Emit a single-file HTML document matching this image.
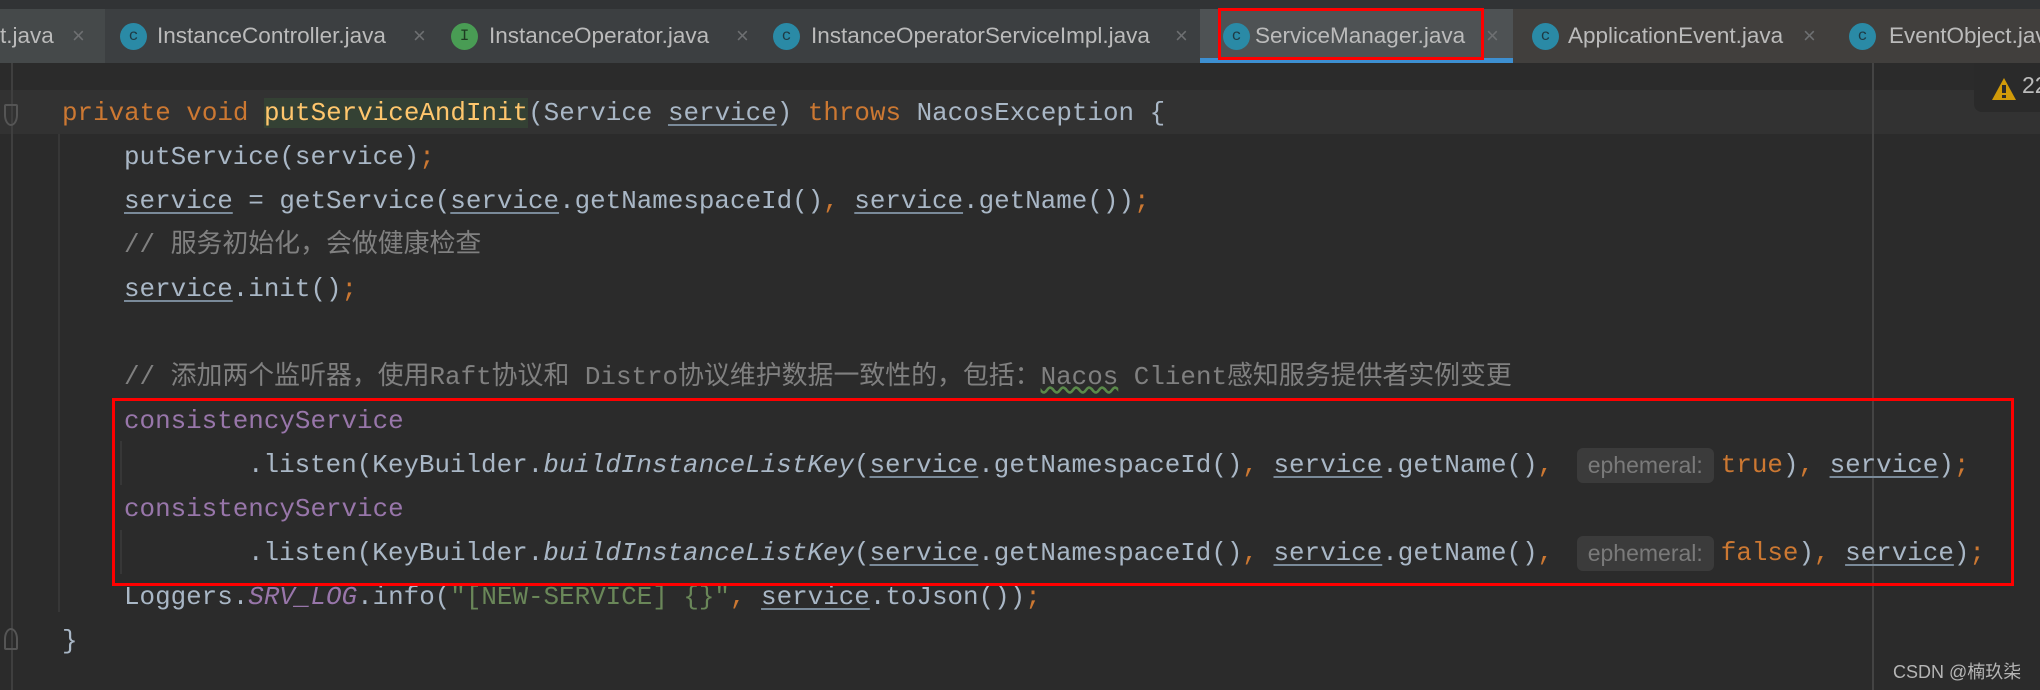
<!DOCTYPE html>
<html><head><meta charset="utf-8"><style>
*{margin:0;padding:0;box-sizing:border-box}
body{width:2040px;height:690px;background:#2b2b2b;overflow:hidden;position:relative;font-family:"Liberation Mono","Noto Sans CJK SC",monospace}
.top{position:absolute;left:0;top:0;width:2040px;height:9px;background:#313335}
.tabs{position:absolute;left:0;top:9px;width:2040px;height:54px;background:#3c3f41}
.tab{position:absolute;top:0;height:54px;font-family:"Liberation Sans",sans-serif;font-size:22.5px;color:#bbbbbb;line-height:54px;white-space:nowrap}
.ic{position:absolute;top:14px;width:27px;height:27px;border-radius:50%;background:#2a8aa6;color:#1e3a44;font-family:"Liberation Mono",monospace;font-size:16px;line-height:27px;text-align:center}
.x{position:absolute;color:#6e7072;font-size:22px}
.line{position:absolute;left:0;height:44px;line-height:44px;font-size:25.9px;color:#a9b7c6;white-space:pre}
.k{color:#cc7832}.m{color:#ffc66d;background:#344134}.p{color:#9876aa}.c{color:#808080}.s{color:#6a8759}
.u{text-decoration:underline;text-decoration-color:#7a8a99;text-underline-offset:4px}
.i{font-style:italic}
.hint{display:inline-block;background:#3b3b3b;color:#7a7a7a;font-family:"Liberation Sans",sans-serif;font-size:23px;line-height:35px;height:35px;padding:0 11px;border-radius:6px;vertical-align:middle;margin:0 7px 0 8px}
.red{position:absolute;border:3px solid #ff0000}
</style></head><body>
<div class="top"></div>
<div class="tabs">
 <div class="tab" style="left:0;width:105px;background:#45494a"><span style="position:absolute;left:0">t.java</span><span class="x" style="left:72px">×</span></div>
 <div class="tab" style="left:120px"><span class="ic" style="left:0">c</span><span style="position:absolute;left:37px">InstanceController.java</span><span class="x" style="left:293px">×</span></div>
 <div class="tab" style="left:451px"><span class="ic" style="left:0;background:#499c54;color:#1e3a22">I</span><span style="position:absolute;left:38px">InstanceOperator.java</span><span class="x" style="left:285px">×</span></div>
 <div class="tab" style="left:773px"><span class="ic" style="left:0">c</span><span style="position:absolute;left:38px">InstanceOperatorServiceImpl.java</span><span class="x" style="left:402px">×</span></div>
 <div class="tab" style="left:1200px;width:313px;background:#4e5254"><span class="ic" style="left:23px">c</span><span style="position:absolute;left:55px">ServiceManager.java</span><span class="x" style="left:286px">×</span><div style="position:absolute;left:0;bottom:0;width:313px;height:5px;background:#3d8fd1"></div></div>
 <div class="tab" style="left:1513px;width:527px;background:#413f3d"><span class="ic" style="left:19px">c</span><span style="position:absolute;left:55px">ApplicationEvent.java</span><span class="x" style="left:290px">×</span><span class="ic" style="left:336px">c</span><span style="position:absolute;left:376px">EventObject.java</span></div>
</div>
<div style="position:absolute;left:0;top:90px;width:2040px;height:44px;background:#323232"></div>
<div style="position:absolute;left:11px;top:63px;width:2px;height:627px;background:#3f3f3f"></div>
<div style="position:absolute;left:58px;top:134px;width:2px;height:478px;background:#373737"></div>
<div style="position:absolute;left:120px;top:441px;width:2px;height:44px;background:#373737"></div>
<div style="position:absolute;left:120px;top:530px;width:2px;height:44px;background:#373737"></div>
<div style="position:absolute;left:1872px;top:63px;width:2px;height:627px;background:#444"></div>
<div style="position:absolute;left:4px;top:104px;width:14px;height:22px;border:2px solid #555;border-radius:2px 2px 50% 50%"></div>
<div style="position:absolute;left:4px;top:628px;width:14px;height:22px;border:2px solid #555;border-radius:50% 50% 2px 2px"></div>
<div style="position:absolute;left:1974px;top:63px;width:70px;height:49px;background:#2a2a2a;border-radius:0 0 0 8px"></div>
<svg style="position:absolute;left:1991px;top:77px" width="26" height="24"><polygon points="13,1 25,23 1,23" fill="#d09a09"/><rect x="11" y="8" width="4" height="8" fill="#2a2a2a"/><rect x="11" y="18" width="4" height="3" fill="#2a2a2a"/></svg>
<div style="position:absolute;left:2022px;top:72px;font-family:'Liberation Sans',sans-serif;font-size:23px;color:#bbb">22</div>

<div class="line" style="top:91px;left:62px"><span class="k">private void </span><span class="m">putServiceAndInit</span>(Service <span class="u">service</span>) <span class="k">throws </span>NacosException {</div>
<div class="line" style="top:135px;left:124px">putService(service)<span class="k">;</span></div>
<div class="line" style="top:179px;left:124px"><span class="u">service</span> = getService(<span class="u">service</span>.getNamespaceId()<span class="k">, </span><span class="u">service</span>.getName())<span class="k">;</span></div>
<div class="line c" style="top:223px;left:124px">// 服务初始化，会做健康检查</div>
<div class="line" style="top:267px;left:124px"><span class="u">service</span>.init()<span class="k">;</span></div>
<div class="line c" style="top:355px;left:124px">// 添加两个监听器，使用Raft协议和 Distro协议维护数据一致性的，包括：<span style="text-decoration:underline wavy #5a8a4a">Nacos</span> Client感知服务提供者实例变更</div>
<div class="line p" style="top:399px;left:124px">consistencyService</div>
<div class="line" style="top:443px;left:248px">.listen(KeyBuilder.<span class="i">buildInstanceListKey</span>(<span class="u">service</span>.getNamespaceId()<span class="k">, </span><span class="u">service</span>.getName()<span class="k">, </span><span class="hint">ephemeral:</span><span class="k">true</span>)<span class="k">, </span><span class="u">service</span>)<span class="k">;</span></div>
<div class="line p" style="top:487px;left:124px">consistencyService</div>
<div class="line" style="top:531px;left:248px">.listen(KeyBuilder.<span class="i">buildInstanceListKey</span>(<span class="u">service</span>.getNamespaceId()<span class="k">, </span><span class="u">service</span>.getName()<span class="k">, </span><span class="hint">ephemeral:</span><span class="k">false</span>)<span class="k">, </span><span class="u">service</span>)<span class="k">;</span></div>
<div class="line" style="top:575px;left:124px">Loggers.<span class="p i">SRV_LOG</span>.info(<span class="s">"[NEW-SERVICE] {}"</span><span class="k">, </span><span class="u">service</span>.toJson())<span class="k">;</span></div>
<div class="line" style="top:619px;left:62px">}</div>

<div class="red" style="left:1218px;top:8px;width:266px;height:52px"></div>
<div class="red" style="left:112px;top:398px;width:1902px;height:188px"></div>
<div style="position:absolute;left:1893px;top:658px;font-family:'Liberation Sans','Noto Sans CJK SC',sans-serif;font-size:18px;color:#b5b5b5">CSDN @楠玖柒</div>
</body></html>
